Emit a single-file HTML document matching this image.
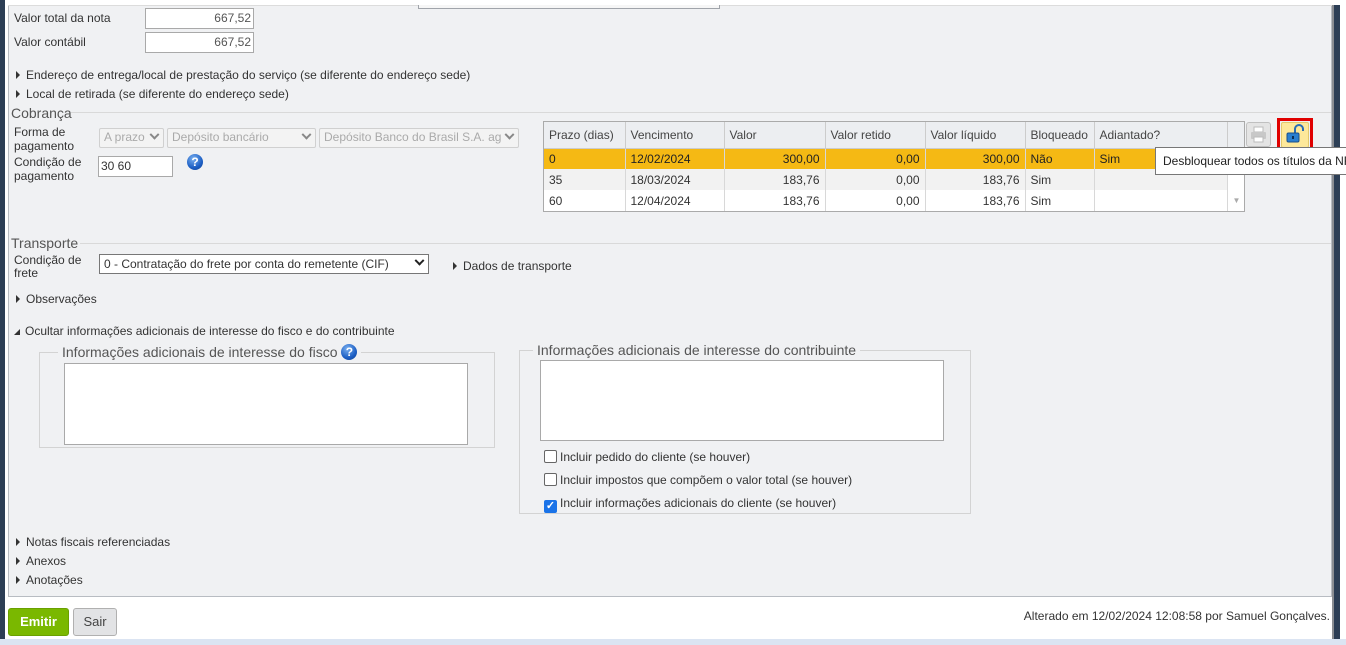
<!DOCTYPE html>
<html><head><meta charset="utf-8"><style>
*{box-sizing:border-box;margin:0;padding:0}
body{width:1346px;height:645px;overflow:hidden;background:#fff;font-family:"Liberation Sans",sans-serif;font-size:12px;color:#333;position:relative}
.a{position:absolute;white-space:nowrap}
.inp{position:absolute;background:#fff;border:1px solid #a9a9a9;font-size:12px;padding:0 2px;line-height:18px;white-space:nowrap;overflow:hidden}
.sel{position:absolute;border:1px solid #d0d0d0;color:#aaa;background:#f3f3f3;font-size:12px;line-height:17px;padding-left:4px;border-radius:2px;white-space:nowrap;overflow:hidden}
.tri{display:inline-block;width:0;height:0;border-left:4px solid #333;border-top:4px solid transparent;border-bottom:4px solid transparent;margin-right:6px;vertical-align:0}
.chev{position:absolute;right:5px;top:5px;width:7px;height:7px;border-right:2px solid #888;border-bottom:2px solid #888;transform:rotate(45deg) translate(-2px,-2px)}
.help{position:absolute;width:16px;height:16px;border-radius:50%;background:radial-gradient(circle at 40% 30%,#7ab0f0,#1d5fc4 60%,#0f3e8f);color:#fff;font:bold 12px "Liberation Sans",sans-serif;text-align:center;line-height:16px}
table{border-collapse:collapse;font-size:12px;table-layout:fixed}
td{border-right:1px solid #d8d8d8;height:21px;padding:0 5px;white-space:nowrap;overflow:hidden}
.hd td{height:26px;background:#eceef1;border-right:1px solid #ccc;border-bottom:1px solid #ccc;color:#444}
.r{text-align:right}
.line{position:absolute;height:1px;background:#d9d9d9}
.cb{display:inline-block;width:13px;height:13px;border:1px solid #666;border-radius:2px;background:#fff;vertical-align:-2px;margin-right:3px}
</style></head><body>
<div class="a" style="left:0;top:0;width:5px;height:640px;background:#2c3e55"></div>
<div class="a" style="left:8px;top:5px;width:1324px;height:592px;background:#f0f1f3;border:1px solid #b8bcc2;border-top:none"></div>
<div class="a" style="left:8px;top:5px;width:1324px;height:1px;background:#dcdcdc"></div>
<div class="a" style="left:1334px;top:5px;width:6px;height:635px;background:#2c3e55"></div>
<div class="a" style="left:1332px;top:5px;width:2px;height:635px;background:#8a8d92"></div>
<div class="a" style="left:0;top:639px;width:1346px;height:6px;background:#dbe4f2"></div>
<div class="a" style="left:418px;top:5px;width:302px;height:4px;border:1px solid #a0a4aa;border-top:none;background:#f6f6f6"></div>

<div class="a" style="left:14px;top:11px">Valor total da nota</div>
<div class="inp r" style="left:145px;top:8px;width:109px;height:21px;line-height:19px;color:#555">667,52</div>
<div class="a" style="left:14px;top:35px">Valor contábil</div>
<div class="inp r" style="left:145px;top:32px;width:109px;height:21px;line-height:19px;color:#555">667,52</div>

<div class="a" style="left:16px;top:68px"><span class="tri"></span>Endereço de entrega/local de prestação do serviço (se diferente do endereço sede)</div>
<div class="a" style="left:16px;top:87px"><span class="tri"></span>Local de retirada (se diferente do endereço sede)</div>

<div class="a" style="left:11px;top:105px;font-size:14px;color:#555">Cobrança</div>
<div class="line" style="left:71px;top:112px;width:1260px"></div>
<div class="a" style="left:14px;top:125px;line-height:14px">Forma de<br>pagamento</div>
<div class="sel" style="left:99px;top:128px;width:65px;height:20px">A prazo<span class="chev"></span></div>
<div class="sel" style="left:167px;top:128px;width:149px;height:20px">Depósito bancário<span class="chev"></span></div>
<div class="sel" style="left:319px;top:128px;width:200px;height:20px">Depósito Banco do Brasil S.A. ag<span class="chev" style="background:#f3f3f3"></span></div>
<div class="a" style="left:14px;top:155px;line-height:14px">Condição de<br>pagamento</div>
<div class="inp" style="left:98px;top:156px;width:75px;height:21px">30 60</div>
<div class="help" style="left:187px;top:154px">?</div>

<div class="a" style="left:543px;top:121px;width:702px;height:91px;border:1px solid #aaa;background:#fff">
<table style="width:700px">
<tr class="hd"><td style="width:81px">Prazo (dias)</td><td style="width:99px">Vencimento</td><td style="width:101px">Valor</td><td style="width:100px">Valor retido</td><td style="width:100px">Valor líquido</td><td style="width:69px">Bloqueado</td><td style="width:133px">Adiantado?</td><td style="border-right:none"></td></tr>
<tr style="background:#f5b914;color:#222"><td>0</td><td>12/02/2024</td><td class="r">300,00</td><td class="r">0,00</td><td class="r">300,00</td><td>Não</td><td style="width:74px">Sim</td><td style="background:#fff;border:none"></td></tr>
<tr style="background:#f2f2f2"><td>35</td><td>18/03/2024</td><td class="r">183,76</td><td class="r">0,00</td><td class="r">183,76</td><td>Sim</td><td></td><td style="background:#fff;border:none"></td></tr>
<tr><td>60</td><td>12/04/2024</td><td class="r">183,76</td><td class="r">0,00</td><td class="r">183,76</td><td>Sim</td><td></td><td style="border:none;color:#aaa;font-size:8px;text-align:center">▼</td></tr>
</table></div>
<div class="a" style="left:1246px;top:122px;width:25px;height:25px;border:1px solid #c0c0c0;border-radius:3px;background:#e4e4e4">
<svg width="23" height="23" viewBox="0 0 23 23"><rect x="7" y="4" width="9" height="5" fill="#fff" stroke="#bbb"/><rect x="4" y="9" width="15" height="7" rx="1" fill="#c8c8c8"/><rect x="7" y="14" width="9" height="5" fill="#fff" stroke="#bbb"/></svg></div>
<div class="a" style="left:1277px;top:118px;width:36px;height:34px;border:3px solid #e00000"></div>
<div class="a" style="left:1281px;top:122px;width:28px;height:26px;background:#fde89a;border:1px solid #e2c96b;border-radius:2px">
<svg width="26" height="24" viewBox="0 0 26 24"><path d="M13 10V6a4 4 0 0 1 8 0v2" fill="none" stroke="#2a6db5" stroke-width="2"/><rect x="5" y="10" width="12" height="9" rx="1.5" fill="#2a7fd0" stroke="#1b4f8a"/><rect x="10" y="13" width="2" height="3" fill="#0b2e55"/></svg></div>
<div class="a" style="left:1155px;top:147px;width:200px;height:28px;background:#fff;border:1px solid #777;font-size:12px;line-height:26px;padding-left:7px;color:#222">Desbloquear todos os títulos da NF</div>

<div class="a" style="left:11px;top:235px;font-size:14px;color:#555">Transporte</div>
<div class="line" style="left:80px;top:243px;width:1251px"></div>
<div class="a" style="left:14px;top:254px;line-height:13px">Condição de<br>frete</div>
<div class="inp" style="left:99px;top:254px;width:330px;height:20px;border-color:#777;line-height:18px;padding-left:4px">0 - Contratação do frete por conta do remetente (CIF)<span class="chev" style="border-color:#222"></span></div>
<div class="a" style="left:453px;top:259px"><span class="tri"></span>Dados de transporte</div>

<div class="a" style="left:16px;top:292px"><span class="tri"></span>Observações</div>
<div class="a" style="left:14px;top:324px"><span style="display:inline-block;width:0;height:0;border-right:6px solid #333;border-top:6px solid transparent;margin-right:5px;vertical-align:0"></span>Ocultar informações adicionais de interesse do fisco e do contribuinte</div>

<div class="a" style="left:39px;top:352px;width:456px;height:96px;border:1px solid #d3d3d3"></div>
<div class="a" style="left:58px;top:344px;font-size:14px;color:#555;background:#f0f1f3;padding:0 4px;line-height:17px">Informações adicionais de interesse do fisco <span style="display:inline-block;width:16px;height:16px;border-radius:50%;background:radial-gradient(circle at 40% 30%,#7ab0f0,#1d5fc4 60%,#0f3e8f);color:#fff;font:bold 12px 'Liberation Sans',sans-serif;text-align:center;line-height:16px;vertical-align:1px">?</span></div>
<div class="a" style="left:64px;top:363px;width:404px;height:82px;background:#fff;border:1px solid #a9a9a9"></div>

<div class="a" style="left:519px;top:350px;width:452px;height:164px;border:1px solid #d3d3d3"></div>
<div class="a" style="left:533px;top:342px;font-size:14px;color:#555;background:#f0f1f3;padding:0 4px;line-height:17px">Informações adicionais de interesse do contribuinte</div>
<div class="a" style="left:540px;top:360px;width:404px;height:81px;background:#fff;border:1px solid #a9a9a9"></div>
<div class="a" style="left:544px;top:450px"><span class="cb"></span>Incluir pedido do cliente (se houver)</div>
<div class="a" style="left:544px;top:473px"><span class="cb"></span>Incluir impostos que compõem o valor total (se houver)</div>
<div class="a" style="left:544px;top:496px"><span class="cb" style="background:#1a73e8;border-color:#1a73e8;color:#fff;font-size:11px;line-height:11px;text-align:center;font-weight:bold">✓</span>Incluir informações adicionais do cliente (se houver)</div>

<div class="a" style="left:16px;top:535px"><span class="tri"></span>Notas fiscais referenciadas</div>
<div class="a" style="left:16px;top:554px"><span class="tri"></span>Anexos</div>
<div class="a" style="left:16px;top:573px"><span class="tri"></span>Anotações</div>

<div class="a" style="left:8px;top:608px;width:61px;height:28px;background:#7ab800;border:1px solid #6aa000;border-radius:3px;color:#fff;font-weight:bold;font-size:13px;text-align:center;line-height:26px">Emitir</div>
<div class="a" style="left:73px;top:608px;width:44px;height:28px;background:#e2e3e5;border:1px solid #b0b0b0;border-radius:3px;color:#444;font-size:13px;text-align:center;line-height:26px">Sair</div>
<div class="a" style="right:16px;top:609px;font-size:12px;color:#333">Alterado em 12/02/2024 12:08:58 por Samuel Gonçalves.</div>
</body></html>
